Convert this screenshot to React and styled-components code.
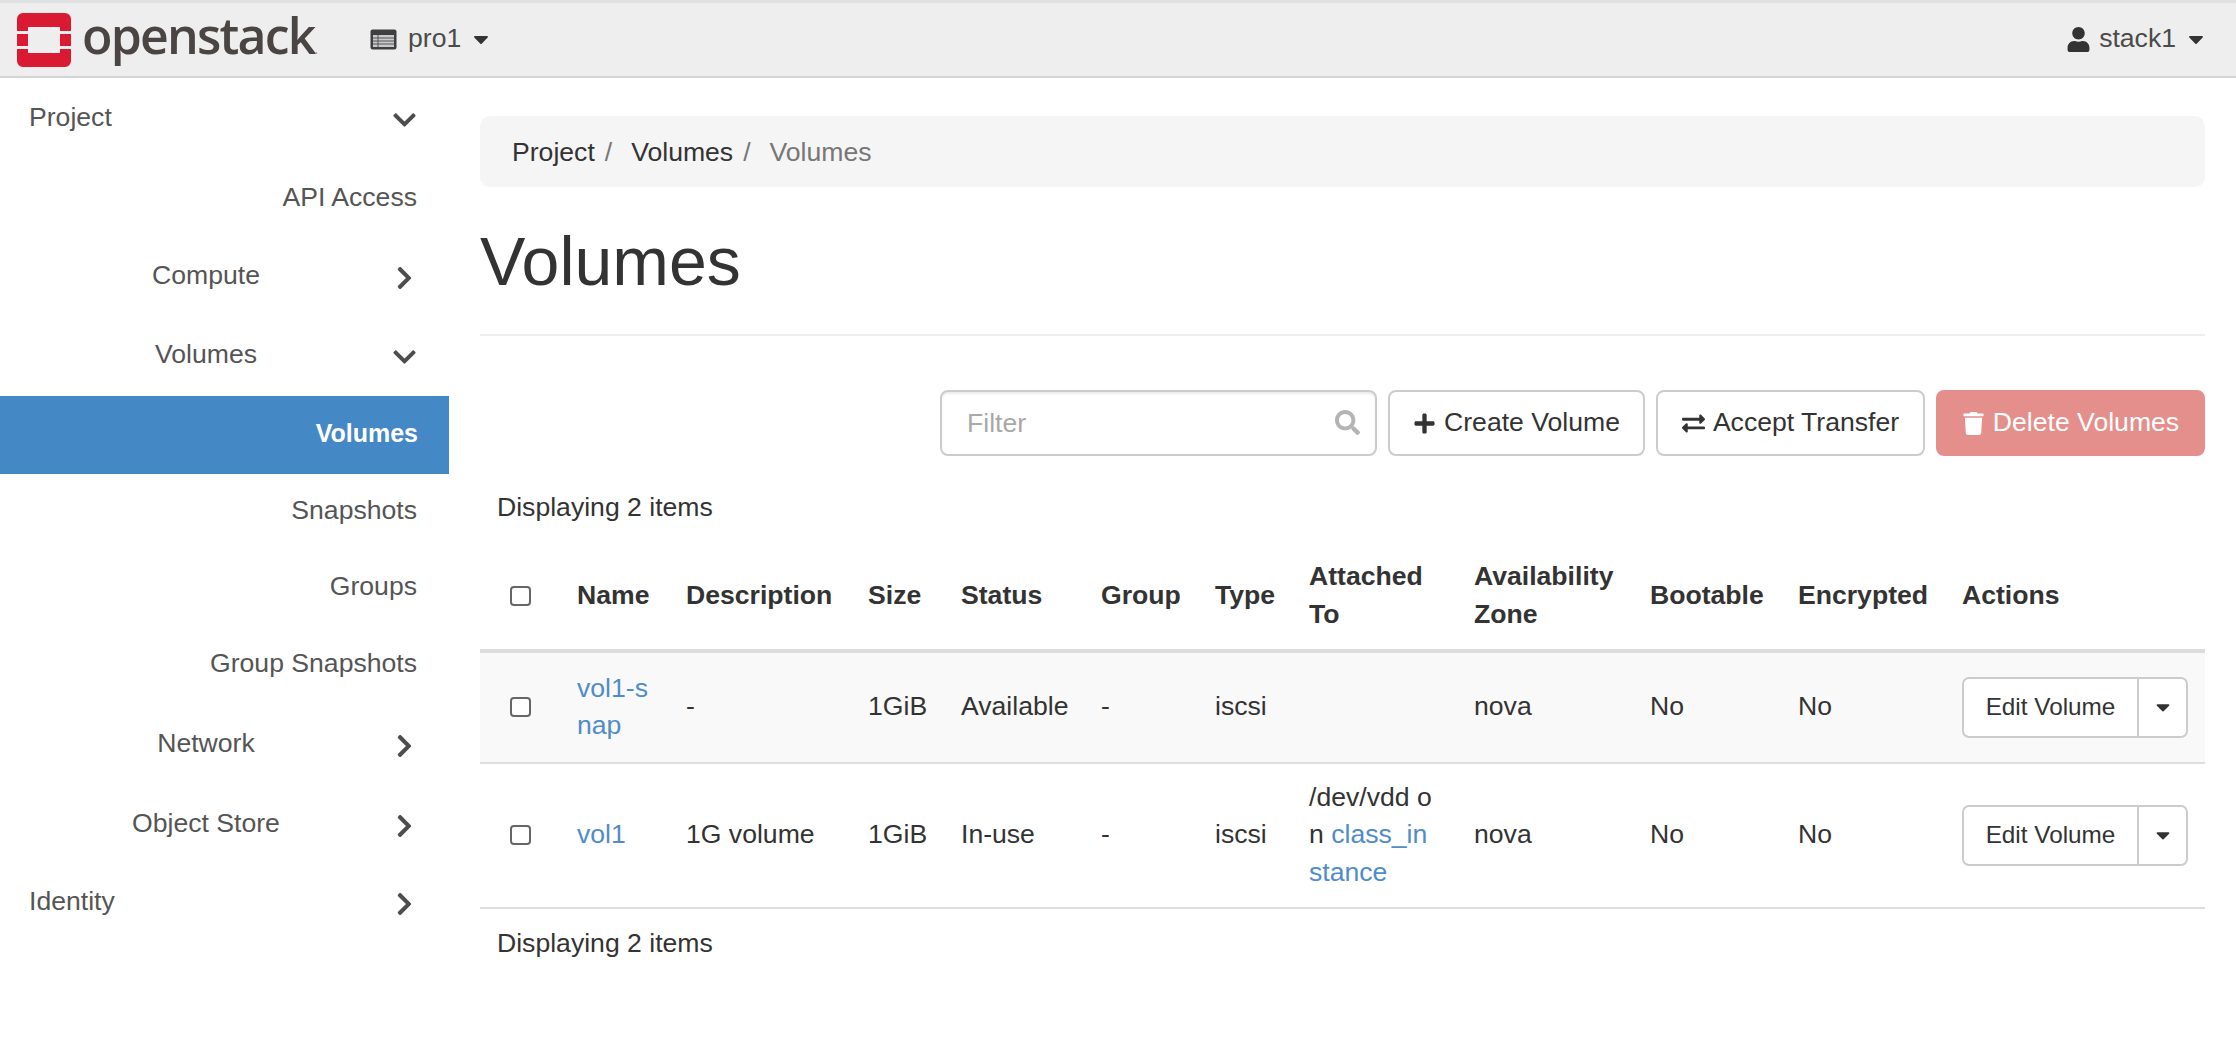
import React from "react";
import styled, { createGlobalStyle } from "styled-components";
import { FaUser, FaChevronDown, FaChevronRight, FaPlus, FaExchangeAlt, FaTrash, FaSearch, FaCaretDown } from "react-icons/fa";

const Global = createGlobalStyle`
  html, body { margin: 0; padding: 0; background: #fff; }
  body { font-family: "Liberation Sans", Arial, sans-serif; font-size: 26.6px; line-height: 37.5px; color: #333; }
  * { box-sizing: border-box; }
`;

const Page = styled.div`
  width: 2236px;
  min-height: 1058px;
  display: flex;
  flex-direction: column;
`;

const Nav = styled.header`
  height: 78px;
  background: #eeeeee;
  border-top: 3px solid #dfe1e3;
  border-bottom: 2px solid #d4d4d4;
  display: flex;
  align-items: center;
  padding: 0 28px 0 17px;
  color: #4b4b4b;
`;

const Brand = styled.div`
  display: flex;
  align-items: center;
  gap: 11px;
  width: 353px;
`;

const Wordmark = styled.span`
  font-family: "Open Sans", sans-serif;
  font-size: 50px;
  font-weight: 600;
  line-height: 54px;
  letter-spacing: -1.8px;
  color: #4a4543;
  position: relative;
  top: 3px;
`;

const Registered = styled.span`
  font-size: 12px;
  color: #999;
  letter-spacing: 0;
`;

const NavMenu = styled.div`
  display: flex;
  align-items: center;
  gap: 11px;
  margin-top: -1px;
`;

const NavCaret = styled(FaCaretDown)`
  font-size: 24px;
  margin-left: -3px;
  color: #333;
`;

const UserIcon = styled(FaUser)`
  font-size: 25px;
  margin-right: -3px;
  color: #333;
`;

const Spacer = styled.div`
  flex: 1;
`;

const Body = styled.div`
  display: flex;
  flex: 1;
`;

const Sidebar = styled.nav`
  width: 449px;
  flex: none;
  color: #555;
`;

const Row = styled.div`
  height: ${(p) => p.$h}px;
  display: flex;
  align-items: center;
  padding-right: ${(p) => (p.$active ? 31 : 32)}px;
  background: ${(p) => (p.$active ? "#4588c6" : "transparent")};
  color: ${(p) => (p.$active ? "#fff" : "#555")};
  font-weight: ${(p) => (p.$active ? 700 : 400)};
  font-size: ${(p) => (p.$active ? 25 : 26.6)}px;
`;

const RowLabel = styled.span`
  flex: 1;
  text-align: ${(p) => (p.$level === "top" ? "left" : p.$level === "group" ? "center" : "right")};
  padding-left: ${(p) => (p.$level === "top" ? 29 : p.$level === "group" ? 20 : 0)}px;
  margin-top: ${(p) => (p.$active ? -2 : 1)}px;
`;

const Chevron = styled.span`
  width: 25px;
  margin-top: 6px;
  display: flex;
  justify-content: center;
  font-size: 26px;
  color: #4d4d4d;
`;

const Main = styled.main`
  flex: 1;
  padding: 38px 31px 0;
  min-width: 0;
`;

const Crumbs = styled.ol`
  list-style: none;
  margin: 0;
  height: 71px;
  padding: 2px 32px 0;
  background: #f5f5f5;
  border-radius: 10px;
  display: flex;
  align-items: center;
`;

const Crumb = styled.li`
  color: ${(p) => (p.$current ? "#777" : "#333")};
`;

const CrumbSep = styled.li`
  color: #777;
  margin: 0 19px 0 10px;
`;

const PageHeader = styled.div`
  height: 149px;
  border-bottom: 2px solid #eeeeee;
  display: flex;
  align-items: center;
`;

const Title = styled.h1`
  margin: 0;
  font-size: 68px;
  line-height: 74px;
  font-weight: 400;
  color: #333;
`;

const Toolbar = styled.div`
  margin-top: 54px;
  display: flex;
  justify-content: flex-end;
  gap: 11px;
`;

const FilterBox = styled.div`
  position: relative;
  width: 437px;
  height: 66px;
`;

const FilterInput = styled.input`
  width: 100%;
  height: 100%;
  border: 2px solid #ccc;
  border-radius: 8px;
  box-shadow: inset 0 2px 2px rgba(0, 0, 0, 0.08);
  padding: 0 60px 0 25px;
  font: inherit;
  background: #fff;
  &::placeholder { color: #a8a8a8; opacity: 1; }
`;

const FilterIcon = styled.span`
  position: absolute;
  right: 17px;
  top: 20px;
  font-size: 25px;
  line-height: 25px;
  color: #b4b4b4;
`;

const Button = styled.button`
  height: 66px;
  width: ${(p) => p.$w}px;
  padding: 0;
  display: flex;
  align-items: center;
  justify-content: center;
  gap: 8px;
  font: inherit;
  color: ${(p) => (p.$danger ? "#fff" : "#333")};
  background: ${(p) => (p.$danger ? "#e58f8d" : "#fff")};
  border: 2px solid ${(p) => (p.$danger ? "#e58f8d" : "#ccc")};
  border-radius: 8px;
  & svg { font-size: 23px; flex: none; }
`;

const Count = styled.div`
  margin-top: ${(p) => p.$top}px;
  padding-left: 17px;
`;

const Table = styled.table`
  margin-top: 14px;
  width: 100%;
  table-layout: fixed;
  border-collapse: separate;
  border-spacing: 0;
`;

const HeadCell = styled.th`
  height: 112px;
  padding: 2px 0 0 11px;
  text-align: left;
  font-weight: 700;
  vertical-align: middle;
  border-bottom: 4px solid #dddddd;
  white-space: nowrap;
`;

const BodyRow = styled.tr`
  height: ${(p) => p.$h}px;
  background: ${(p) => (p.$striped ? "#f9f9f9" : "#fff")};
`;

const Cell = styled.td`
  padding: 0 0 0 11px;
  vertical-align: middle;
  border-bottom: 2px solid #dddddd;
  white-space: nowrap;
`;

const BoxCell = styled.div`
  display: flex;
  justify-content: center;
  padding-right: 17px;
`;

const Check = styled.span`
  display: block;
  width: 21px;
  height: 20px;
  border: 2px solid #666;
  border-radius: 4px;
  background: #fff;
`;

const Link = styled.a`
  color: #4f8cc9;
  text-decoration: none;
`;

const SplitButton = styled.div`
  display: inline-flex;
  height: 61px;
  background: #fff;
  border: 2px solid #ccc;
  border-radius: 7px;
  font-size: 24.3px;
  vertical-align: middle;
`;

const SplitMain = styled.span`
  width: 173px;
  display: flex;
  align-items: center;
  justify-content: center;
`;

const SplitToggle = styled.span`
  width: 49px;
  border-left: 2px solid #ccc;
  display: flex;
  align-items: center;
  justify-content: center;
  font-size: 22px;
`;

const Logo = () => (
  <svg width="54" height="54" viewBox="0 0 54 54" aria-hidden="true">
    <path fill="#da1a32" d="M6 0h42a6 6 0 0 1 6 6v12H43v-4H11v4H0V6a6 6 0 0 1 6-6Z" />
    <path fill="#da1a32" d="M0 21h11v12H0zM43 21h11v12H43z" />
    <path fill="#da1a32" d="M0 36h11v4h32v-4h11v12a6 6 0 0 1-6 6H6a6 6 0 0 1-6-6Z" />
  </svg>
);

const ProjectIcon = () => (
  <svg width="27" height="21" viewBox="0 0 27 21" aria-hidden="true">
    <rect x="0.5" y="0.5" width="26" height="20" rx="2" fill="#3f3f42" />
    <rect x="3" y="6" width="21" height="12" fill="#c9c9c9" />
    <path d="M3 9h21M3 12h21M3 15h21M8 6v12" stroke="#55555a" strokeWidth="1" />
  </svg>
);

const menu = [
  { label: "Project", level: "top", h: 78, icon: "down" },
  { label: "API Access", level: "leaf", h: 82 },
  { label: "Compute", level: "group", h: 74, icon: "right" },
  { label: "Volumes", level: "group", h: 84, icon: "down" },
  { label: "Volumes", level: "leaf", h: 78, active: true },
  { label: "Snapshots", level: "leaf", h: 73 },
  { label: "Groups", level: "leaf", h: 78 },
  { label: "Group Snapshots", level: "leaf", h: 76 },
  { label: "Network", level: "group", h: 84, icon: "right" },
  { label: "Object Store", level: "group", h: 76, icon: "right" },
  { label: "Identity", level: "top", h: 80, icon: "right" },
];

const columns = [
  { w: 86 },
  { w: 109, t: "Name" },
  { w: 182, t: "Description" },
  { w: 93, t: "Size" },
  { w: 140, t: "Status" },
  { w: 114, t: "Group" },
  { w: 94, t: "Type" },
  { w: 165, t: <>Attached<br />To</> },
  { w: 176, t: <>Availability<br />Zone</> },
  { w: 148, t: "Bootable" },
  { w: 164, t: "Encrypted" },
  { t: "Actions" },
];

const rows = [
  {
    h: 111, striped: true,
    name: <>vol1-s<br />nap</>, desc: "-", status: "Available", attached: "",
  },
  {
    h: 145,
    name: "vol1", desc: "1G volume", status: "In-use",
    attached: <>/dev/vdd o<br />n <Link>class_in<br />stance</Link></>,
  },
];

export default function App() {
  return (
    <Page>
      <Global />
      <Nav>
        <Brand>
          <Logo />
          <Wordmark>openstack<Registered>.</Registered></Wordmark>
        </Brand>
        <NavMenu>
          <ProjectIcon />
          <span>pro1</span>
          <NavCaret />
        </NavMenu>
        <Spacer />
        <NavMenu>
          <UserIcon />
          <span>stack1</span>
          <NavCaret />
        </NavMenu>
      </Nav>
      <Body>
        <Sidebar>
          {menu.map((m, i) => (
            <Row key={i} $h={m.h} $active={m.active}>
              <RowLabel $level={m.level} $active={m.active}>{m.label}</RowLabel>
              {m.icon && (
                <Chevron>{m.icon === "down" ? <FaChevronDown /> : <FaChevronRight />}</Chevron>
              )}
            </Row>
          ))}
        </Sidebar>
        <Main>
          <Crumbs>
            <Crumb>Project</Crumb>
            <CrumbSep>/</CrumbSep>
            <Crumb>Volumes</Crumb>
            <CrumbSep>/</CrumbSep>
            <Crumb $current>Volumes</Crumb>
          </Crumbs>
          <PageHeader>
            <Title>Volumes</Title>
          </PageHeader>
          <Toolbar>
            <FilterBox>
              <FilterInput placeholder="Filter" />
              <FilterIcon><FaSearch /></FilterIcon>
            </FilterBox>
            <Button $w={257}><FaPlus />Create Volume</Button>
            <Button $w={269}><FaExchangeAlt />Accept Transfer</Button>
            <Button $w={269} $danger><FaTrash />Delete Volumes</Button>
          </Toolbar>
          <Count $top={33}>Displaying 2 items</Count>
          <Table>
            <colgroup>
              {columns.map((c, i) => <col key={i} width={c.w} />)}
            </colgroup>
            <thead>
              <tr>
                {columns.map((c, i) => (
                  <HeadCell key={i}>{c.t || <BoxCell><Check /></BoxCell>}</HeadCell>
                ))}
              </tr>
            </thead>
            <tbody>
              {rows.map((r, i) => (
                <BodyRow key={i} $h={r.h} $striped={r.striped}>
                  <Cell><BoxCell><Check /></BoxCell></Cell>
                  <Cell><Link>{r.name}</Link></Cell>
                  <Cell>{r.desc}</Cell>
                  <Cell>1GiB</Cell>
                  <Cell>{r.status}</Cell>
                  <Cell>-</Cell>
                  <Cell>iscsi</Cell>
                  <Cell>{r.attached}</Cell>
                  <Cell>nova</Cell>
                  <Cell>No</Cell>
                  <Cell>No</Cell>
                  <Cell>
                    <SplitButton>
                      <SplitMain>Edit Volume</SplitMain>
                      <SplitToggle><FaCaretDown /></SplitToggle>
                    </SplitButton>
                  </Cell>
                </BodyRow>
              ))}
            </tbody>
          </Table>
          <Count $top={16}>Displaying 2 items</Count>
        </Main>
      </Body>
    </Page>
  );
}
